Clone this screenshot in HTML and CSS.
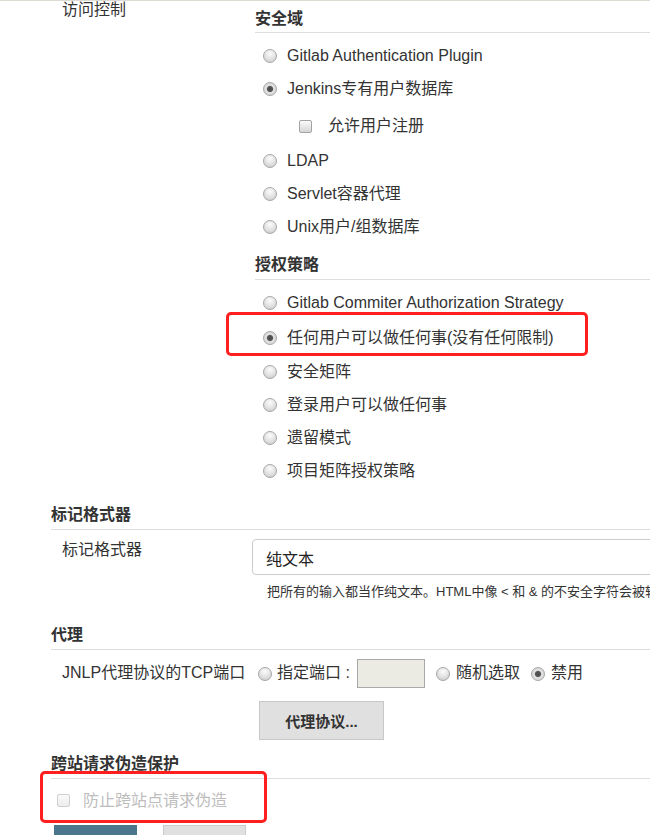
FILE: index.html
```html
<!DOCTYPE html>
<html lang="zh-CN">
<head>
<meta charset="utf-8">
<title>Jenkins 全局安全配置</title>
<link rel="stylesheet" href="styles.css">
</head>
<body>
<div class="page">
  <div class="topline"></div>

  <div class="row access">
    <div class="label">访问控制</div>
    <div class="content">
      <div class="subhead">安全域</div>
      <div class="opts realm">
        <label class="opt"><input class="radio" type="radio" name="realm"><span>Gitlab Authentication Plugin</span></label>
        <label class="opt"><input class="radio" type="radio" name="realm" checked><span>Jenkins专有用户数据库</span></label>
        <div class="nested">
          <label class="opt"><input class="check" type="checkbox"><span>允许用户注册</span></label>
        </div>
        <label class="opt"><input class="radio" type="radio" name="realm"><span>LDAP</span></label>
        <label class="opt"><input class="radio" type="radio" name="realm"><span>Servlet容器代理</span></label>
        <label class="opt"><input class="radio" type="radio" name="realm"><span>Unix用户/组数据库</span></label>
      </div>
      <div class="subhead second">授权策略</div>
      <div class="opts authz">
        <label class="opt"><input class="radio" type="radio" name="authz"><span>Gitlab Commiter Authorization Strategy</span></label>
        <label class="opt tall"><input class="radio" type="radio" name="authz" checked><span>任何用户可以做任何事(没有任何限制)</span></label>
        <label class="opt"><input class="radio" type="radio" name="authz"><span>安全矩阵</span></label>
        <label class="opt"><input class="radio" type="radio" name="authz"><span>登录用户可以做任何事</span></label>
        <label class="opt"><input class="radio" type="radio" name="authz"><span>遗留模式</span></label>
        <label class="opt"><input class="radio" type="radio" name="authz"><span>项目矩阵授权策略</span></label>
      </div>
    </div>
  </div>

  <div class="section-head markup-head">标记格式器</div>
  <div class="row formatter">
    <div class="label">标记格式器</div>
    <div class="select">纯文本</div>
  </div>
  <div class="desc">把所有的输入都当作纯文本。HTML中像 &lt; 和 &amp; 的不安全字符会被转义为其对应的字符实体。</div>

  <div class="section-head agent-head">代理</div>
  <div class="row jnlp">
    <div class="label">JNLP代理协议的TCP端口</div>
    <input class="radio r-fixed" type="radio" name="port">
    <span>指定端口 :</span>
    <input class="port" type="text" disabled>
    <input class="radio r-random" type="radio" name="port">
    <span>随机选取</span>
    <input class="radio r-off" type="radio" name="port" checked>
    <span>禁用</span>
  </div>
  <div class="btn-row">
    <button class="btn">代理协议...</button>
  </div>

  <div class="section-head csrf-head">跨站请求伪造保护</div>
  <label class="csrf"><input class="check" type="checkbox" disabled><span>防止跨站点请求伪造</span></label>

  <div class="actions">
    <button class="save"></button>
    <button class="apply"></button>
  </div>

  <div class="mark mark-authz"></div>
  <div class="mark mark-csrf"></div>
</div>
</body>
</html>
```
FILE: styles.css
```css
* { box-sizing: border-box; }
html, body { margin: 0; padding: 0; background: #fff; }
body {
  font-family: "Liberation Sans", Arial, "Noto Sans CJK SC", sans-serif;
  font-size: 16px;
  line-height: 20px;
  color: #333;
  overflow: hidden;
}
.page {
  position: relative;
  width: 650px;
  height: 835px;
  overflow: hidden;
  padding-left: 51px;
}
.topline { height: 1px; background: #dcdcd4; margin-left: -51px; }

.row { display: flex; }
.label { width: 201px; padding-left: 11px; flex: none; white-space: nowrap; }

.access .label { line-height: 18px; }
.access .content { flex: 1; padding-left: 3px; }

.subhead {
  font-weight: bold;
  line-height: 22px;
  margin-top: 7px;
  padding-bottom: 2px;
  border-bottom: 1px solid #dddddd;
}
.subhead.second { margin-top: 11px; padding-bottom: 3px; }

.opts.realm { margin-top: 6px; }
.opts.authz { margin-top: 6px; }
.opt {
  display: flex;
  align-items: center;
  height: 33px;
  padding-left: 8px;
  padding-top: 1px;
  white-space: nowrap;
}
.opt.tall { height: 36px; padding-top: 2px; }
.nested { padding: 4px 0 2px 36px; }

.radio {
  -webkit-appearance: none;
  appearance: none;
  flex: none;
  width: 14px;
  height: 14px;
  margin: 0 10px 0 0;
  border: 1px solid #a6a6a6;
  border-radius: 50%;
  background: radial-gradient(circle at 50% 30%, #fbfbfb 0%, #e6e6e6 45%, #c6c6c6 100%);
}
.radio:checked {
  background: radial-gradient(circle at 50% 50%, #4a4a4a 0, #555 2.6px, #e2e2e2 3.6px, #cdcdcd 100%);
}
.check {
  -webkit-appearance: none;
  appearance: none;
  flex: none;
  width: 13px;
  height: 13px;
  margin: 0 16px 0 0;
  border: 1px solid #a3a3a3;
  border-radius: 2px;
  background: linear-gradient(#fbfbfb, #d6d6d6);
}
.check:disabled { border-color: #d0d0d0; background: linear-gradient(#fafafa, #ececec); }

.section-head {
  font-weight: bold;
  line-height: 22px;
  padding-bottom: 3px;
  border-bottom: 1px solid #dddddd;
}
.markup-head { margin-top: 17px; }
.agent-head { margin-top: 23px; }
.csrf-head { margin-top: 13px; }

.formatter { margin-top: 9px; }
.formatter .label { padding-top: 1px; }
.select {
  flex: none;
  width: 420px;
  height: 36px;
  border: 1px solid #cccccc;
  border-radius: 4px;
  padding-left: 13px;
  padding-top: 3px;
  line-height: 34px;
  color: #222;
}
.desc {
  margin-top: 8px;
  margin-left: 216px;
  font-size: 13px;
  line-height: 18px;
  white-space: nowrap;
}

.jnlp { margin-top: 9px; height: 28px; align-items: center; white-space: nowrap; }
.jnlp .label { line-height: 20px; }
.jnlp .radio { margin: 2px 6px 0 0; }
.jnlp .r-fixed { margin-left: 6px; margin-right: 5px; }
.jnlp .r-random { margin-left: 11px; }
.jnlp .r-off { margin-left: 11px; }
.port {
  flex: none;
  width: 68px;
  height: 29px;
  margin: 0 0 0 7px;
  border: 1px solid #a9a9a9;
  background: #ebebe4;
  padding: 0;
}

.btn-row { margin-top: 14px; padding-left: 208px; }
.btn {
  width: 125px;
  height: 39px;
  border: 1px solid #c8c8c8;
  background: #e0e0e0;
  font-family: "Liberation Sans", Arial, "Noto Sans CJK SC", sans-serif;
  font-size: 15px;
  font-weight: bold;
  color: #333;
  padding: 0;
}

.csrf {
  display: flex;
  align-items: center;
  margin-top: 5px;
  height: 33px;
  padding-left: 6px;
  color: #bdbdbd;
}
.csrf .check { margin-right: 13px; }

.actions { display: flex; margin-top: 8px; padding-left: 3px; }
.save {
  width: 83px;
  height: 36px;
  border: none;
  background: #4b758b;
}
.apply {
  width: 83px;
  height: 36px;
  margin-left: 26px;
  border: 1px solid #cccccc;
  background: #e0e0e0;
}

.mark {
  position: absolute;
  border: 3px solid #ff1f1f;
  border-radius: 5px;
}
.mark-authz { left: 226px; top: 312px; width: 362px; height: 44px; }
.mark-csrf { left: 40px; top: 771px; width: 227px; height: 52px; }
```
